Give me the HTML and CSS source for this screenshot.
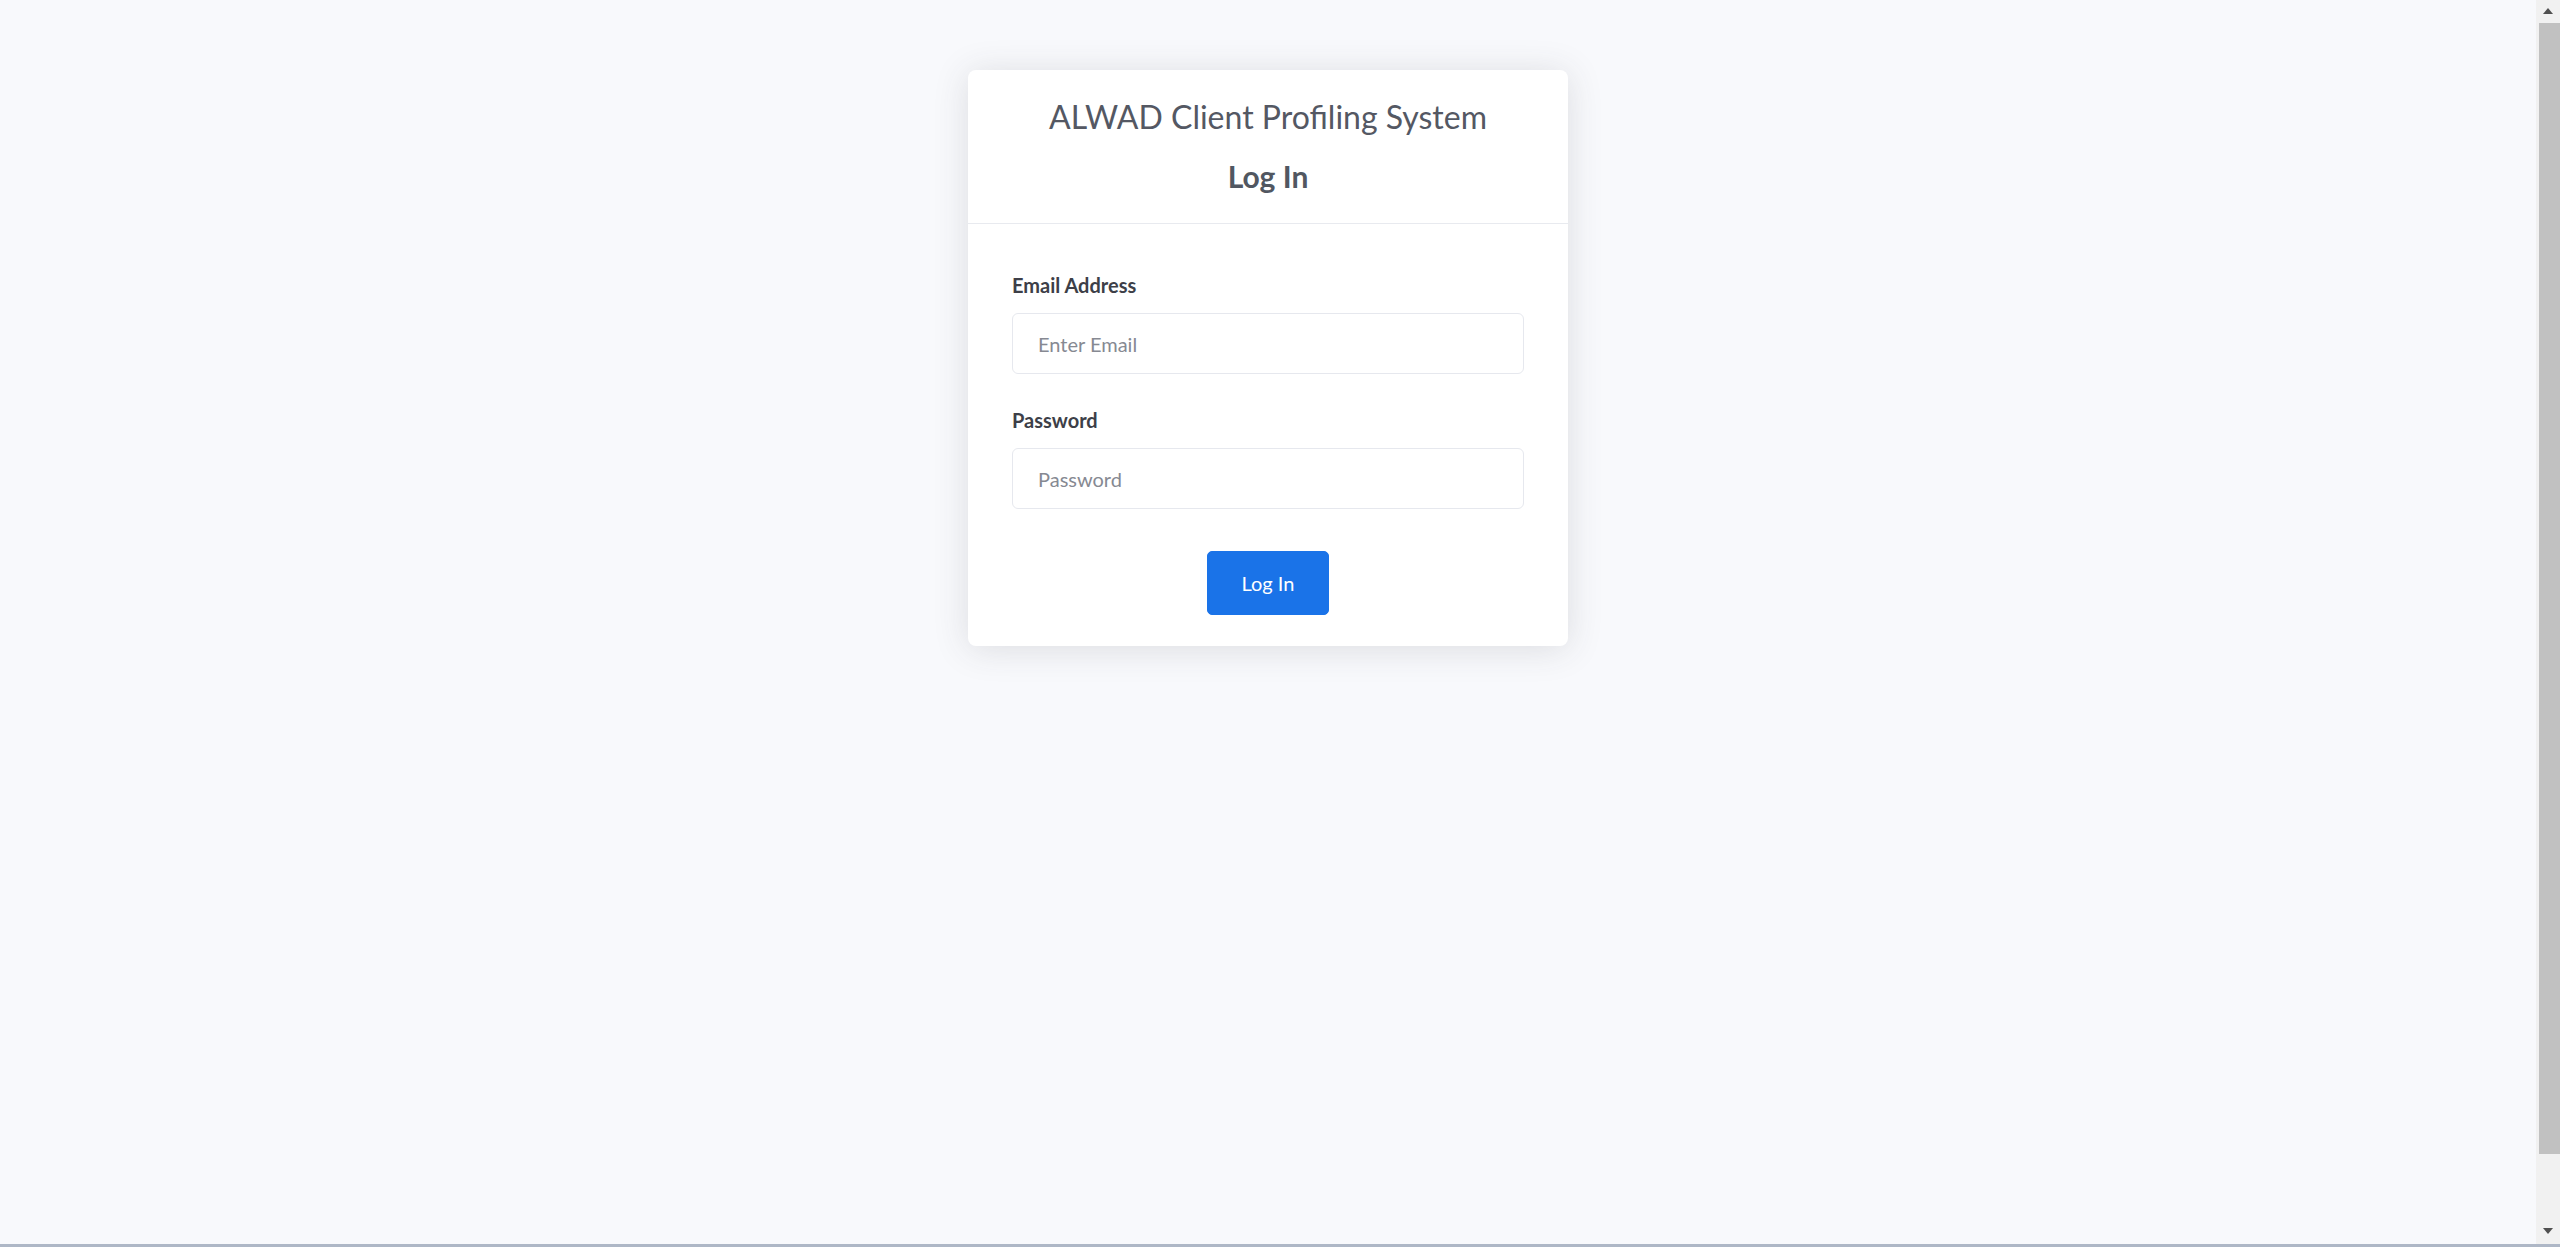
FILE: index.html
```html
<!DOCTYPE html>
<html lang="en">
<head>
<meta charset="utf-8">
<title>ALWAD Client Profiling System - Log In</title>
<link rel="stylesheet" href="styles.css">
</head>
<body>
<main class="page">
  <section class="card">
    <header class="card-header">
      <h1 class="app-title">ALWAD Client Profiling System</h1>
      <h2 class="form-title">Log In</h2>
    </header>
    <form class="card-body">
      <div class="form-group">
        <label class="form-label" for="email">Email Address</label>
        <input class="form-input" id="email" type="email" placeholder="Enter Email">
      </div>
      <div class="form-group">
        <label class="form-label" for="password">Password</label>
        <input class="form-input" id="password" type="password" placeholder="Password">
      </div>
      <div class="form-actions">
        <button class="btn-primary" type="button">Log In</button>
      </div>
    </form>
  </section>
</main>
<div class="scrollbar" aria-hidden="true">
  <span class="scroll-arrow scroll-up"></span>
  <span class="scroll-thumb"></span>
  <span class="scroll-arrow scroll-down"></span>
</div>
<div class="window-edge" aria-hidden="true"></div>
</body>
</html>
```

FILE: styles.css
```css
html, body {
  margin: 0;
  padding: 0;
}

body {
  background: #f8f9fc;
  font-family: Lato, "Open Sans", "Liberation Sans", sans-serif;
  font-size: 20px;
  line-height: 1.5;
  color: #3a3b45;
  overflow: hidden;
}

.page {
  min-height: 100vh;
  box-sizing: border-box;
  padding: 70px 24px 0 0;
  display: flex;
  justify-content: center;
  align-items: flex-start;
}

.card {
  width: 600px;
  background: #ffffff;
  border-radius: 8px;
  box-shadow: 0 3px 35px 0 rgba(58, 59, 69, 0.15);
}

.card-header {
  padding: 28px 20px 29px;
  border-bottom: 1px solid #e8eaef;
  text-align: center;
}

.app-title {
  margin: 0 0 22px;
  font-size: 32px;
  font-weight: 400;
  line-height: 1.2;
  color: #545863;
}

.form-title {
  margin: 0;
  font-size: 30px;
  font-weight: 700;
  line-height: 1.2;
  color: #515761;
}

.card-body {
  padding: 46px 44px 31px;
  margin: 0;
}

.form-group {
  display: flex;
  flex-direction: column;
  margin-bottom: 31px;
}

.form-label {
  font-weight: 700;
  font-size: 20px;
  line-height: 30px;
  color: #3d3f48;
  margin-bottom: 13px;
}

.form-input {
  box-sizing: border-box;
  height: 61px;
  width: 100%;
  padding: 0 25px;
  border: 1px solid #e6e8ee;
  border-radius: 6px;
  font-family: inherit;
  font-size: 20px;
  color: #3a3b45;
  background: #fff;
  outline: none;
}

.form-input::placeholder {
  color: #868992;
}

.form-actions {
  display: flex;
  justify-content: center;
  padding-top: 11px;
}

.btn-primary {
  box-sizing: border-box;
  height: 64px;
  padding: 0 34px;
  border: 1px solid #1a73e8;
  border-radius: 5px;
  background: #1a73e8;
  color: #ffffff;
  font-family: inherit;
  font-size: 20px;
  line-height: 30px;
  cursor: pointer;
}

/* imitation of the browser's vertical scrollbar */
.scrollbar {
  position: fixed;
  top: 0;
  right: 0;
  bottom: 0;
  width: 24px;
  background: #f1f1f1;
  display: flex;
  flex-direction: column;
  align-items: center;
}

.scroll-arrow {
  width: 0;
  height: 0;
  border-left: 5px solid transparent;
  border-right: 5px solid transparent;
}

.scroll-up {
  margin-top: 8px;
  border-bottom: 6px solid #505050;
}

.scroll-thumb {
  margin-top: 9px;
  width: 21px;
  height: 1131px;
  background: #c1c1c1;
  align-self: flex-end;
}

.scroll-down {
  margin-top: auto;
  margin-bottom: 13px;
  border-top: 6px solid #505050;
}

.window-edge {
  position: fixed;
  left: 0;
  right: 0;
  bottom: 0;
  height: 3px;
  background: #aeb7c6;
}
```
